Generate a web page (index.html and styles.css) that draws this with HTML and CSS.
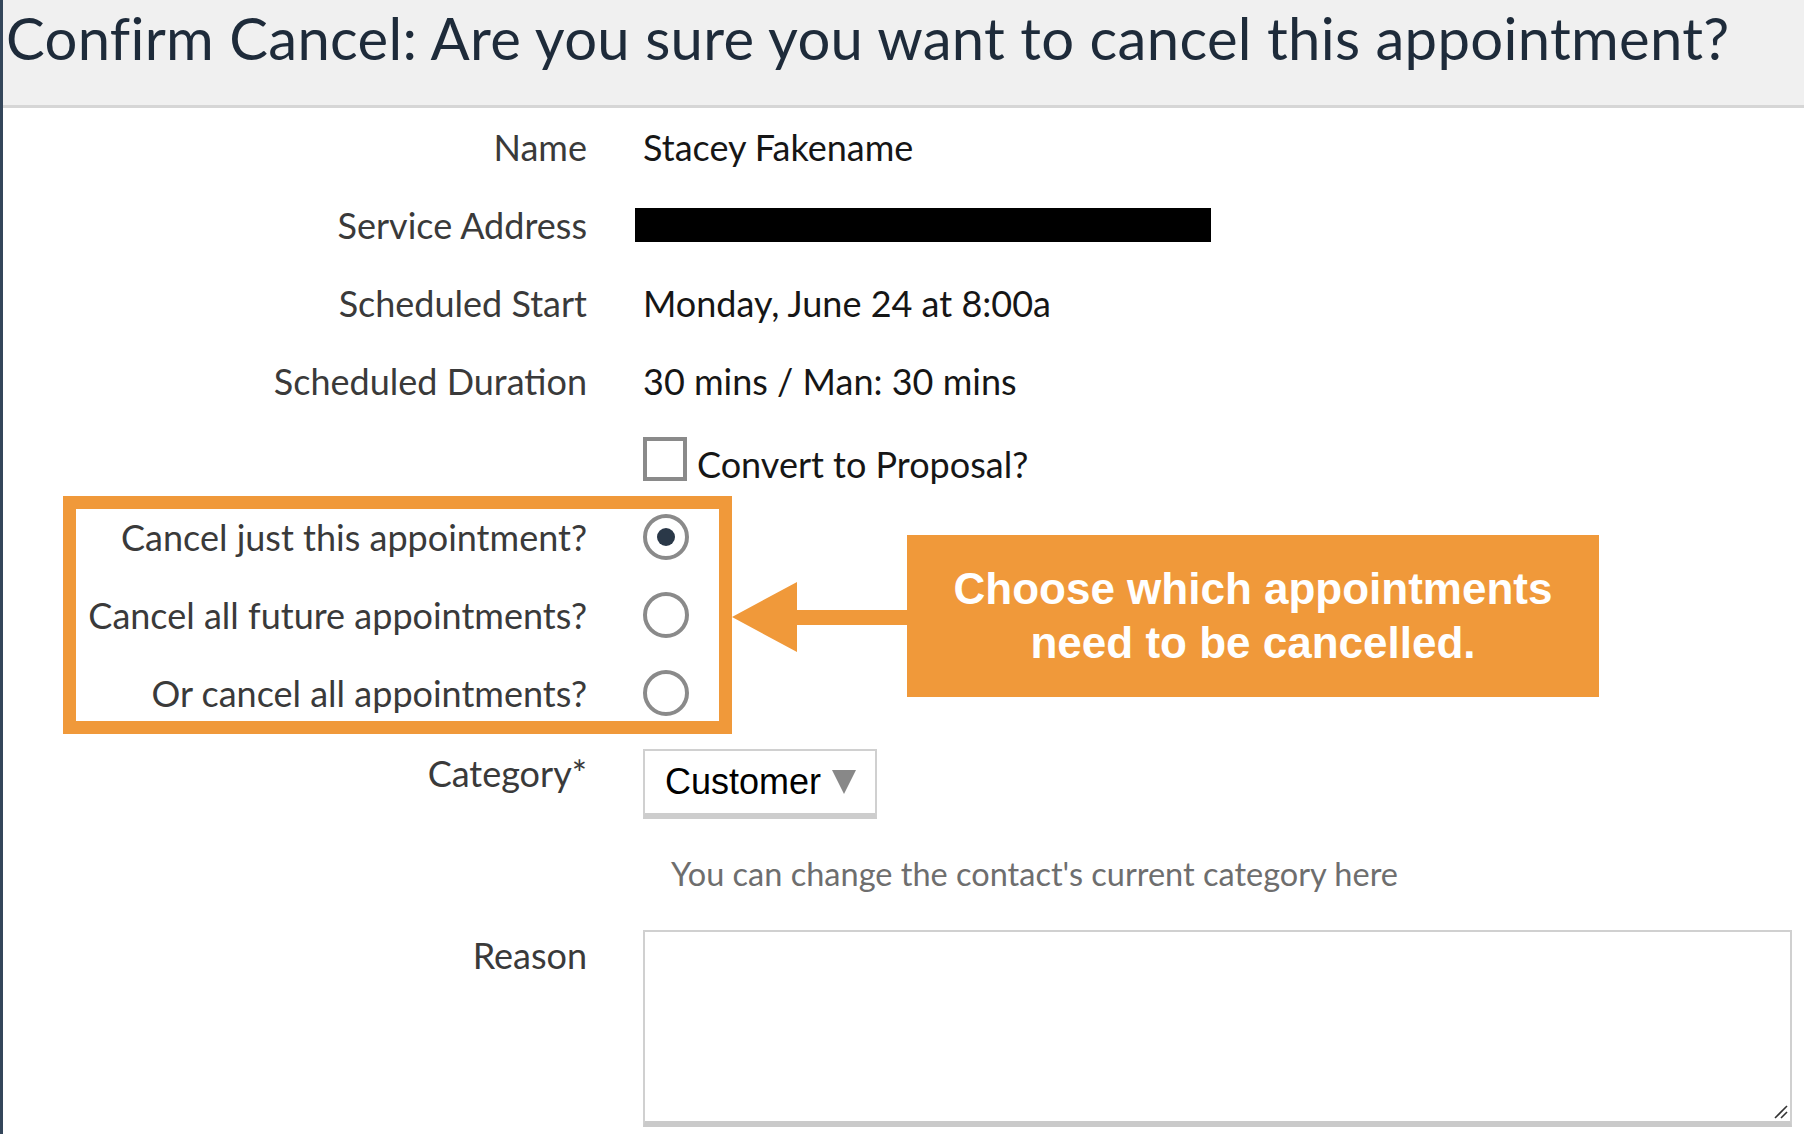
FILE: index.html
```html
<!DOCTYPE html>
<html lang="en">
<head>
<meta charset="utf-8">
<title>Confirm Cancel</title>
<link rel="stylesheet" href="styles.css">
</head>
<body>
<div class="page">
  <header class="header">
    <h1 class="title">Confirm Cancel: Are you sure you want to cancel this appointment?</h1>
  </header>
  <div class="form">
    <div class="row">
      <div class="label">Name</div>
      <div class="value">Stacey Fakename</div>
    </div>
    <div class="row">
      <div class="label">Service Address</div>
      <div class="value"><div class="redact"></div></div>
    </div>
    <div class="row">
      <div class="label">Scheduled Start</div>
      <div class="value">Monday, June 24 at 8:00a</div>
    </div>
    <div class="row">
      <div class="label">Scheduled Duration</div>
      <div class="value">30 mins / Man: 30 mins</div>
    </div>
    <div class="row">
      <div class="label"></div>
      <div class="value check-line"><span class="checkbox"></span><span class="check-text">Convert to Proposal?</span></div>
    </div>
    <div class="row">
      <div class="label">Cancel just this appointment?</div>
      <div class="value"><span class="radio checked"></span></div>
    </div>
    <div class="row">
      <div class="label">Cancel all future appointments?</div>
      <div class="value"><span class="radio"></span></div>
    </div>
    <div class="row">
      <div class="label">Or cancel all appointments?</div>
      <div class="value"><span class="radio"></span></div>
    </div>
    <div class="row row-top category-row">
      <div class="label">Category*</div>
      <div class="value"><div class="select"><span class="select-text">Customer</span><span class="caret"></span></div></div>
    </div>
    <div class="row row-top helper-row">
      <div class="label"></div>
      <div class="value helper">You can change the contact's current category here</div>
    </div>
    <div class="row row-top reason-row">
      <div class="label">Reason</div>
      <div class="value">
        <div class="textarea-wrap">
          <textarea class="textarea"></textarea>
          <svg class="grip" width="16" height="16" viewBox="0 0 16 16">
            <line x1="3" y1="15" x2="15" y2="3" stroke="#333" stroke-width="1.6"/>
            <line x1="9" y1="15" x2="15" y2="9" stroke="#333" stroke-width="1.6"/>
          </svg>
        </div>
      </div>
    </div>
  </div>

  <div class="highlight"></div>
  <svg class="arrow" width="175" height="70" viewBox="0 0 175 70">
    <polygon points="0,35 65,0 65,28 175,28 175,43 65,43 65,70" fill="#f0993a"/>
  </svg>
  <div class="callout">Choose which appointments<br>need to be cancelled.</div>
</div>
</body>
</html>
```

FILE: styles.css
```css
html, body {
  margin: 0;
  padding: 0;
  background: #ffffff;
}

body {
  font-family: Lato, "Open Sans", sans-serif;
}

.page {
  position: relative;
  min-height: 1134px;
  border-left: 3px solid #34465a;
  box-sizing: border-box;
  overflow: hidden;
}

.header {
  height: 105px;
  background: #f0f0f0;
  border-bottom: 3px solid #d6d6d6;
}

.title {
  margin: 0;
  padding: 2px 0 0 3px;
  font-size: 58px;
  letter-spacing: 0.3px;
  line-height: 72px;
  font-weight: 400;
  color: #1e2b3a;
  white-space: nowrap;
}

.form {
  display: flex;
  flex-direction: column;
}

.row {
  display: flex;
  align-items: center;
  height: 78px;
  gap: 56px;
}

.row-top {
  align-items: flex-start;
  height: auto;
}

.label {
  width: 584px;
  flex: 0 0 584px;
  text-align: right;
  font-size: 36px;
  color: #3a3a3a;
  line-height: 48px;
}

.value {
  font-size: 36px;
  color: #161616;
  line-height: 48px;
  display: flex;
  align-items: center;
}

.redact {
  width: 576px;
  height: 34px;
  background: #000;
  margin-left: -8px;
}

.check-line {
  gap: 10px;
}

.checkbox {
  display: inline-block;
  width: 44px;
  height: 44px;
  box-sizing: border-box;
  border: 4px solid #8a8a8a;
  background: #fff;
}

.check-text {
  position: relative;
  top: 5px;
}

.radio {
  display: inline-block;
  width: 46px;
  height: 46px;
  box-sizing: border-box;
  border: 4px solid #8a8a8a;
  border-radius: 50%;
  background: #fff;
  position: relative;
}

.radio.checked::after {
  content: "";
  position: absolute;
  left: 10px;
  top: 10px;
  width: 18px;
  height: 18px;
  border-radius: 50%;
  background: #2a3848;
}

.category-row {
  margin-top: 17px;
}

.select {
  width: 234px;
  height: 70px;
  box-sizing: border-box;
  border: 2px solid #d0d0d0;
  border-bottom: 6px solid #cdcdcd;
  background: #fff;
  display: flex;
  align-items: center;
  padding-left: 20px;
  gap: 11px;
}

.select-text {
  font-family: "Liberation Sans", Arial, sans-serif;
  font-size: 36px;
  color: #000;
}

.caret {
  width: 0;
  height: 0;
  border-left: 12px solid transparent;
  border-right: 12px solid transparent;
  border-top: 24px solid #888888;
}

.helper-row {
  margin-top: 31px;
}

.helper {
  color: #6e6e6e;
  padding-left: 28px;
  font-size: 32.5px;
}

.reason-row {
  margin-top: 32px;
}

.reason-row .label {
  line-height: 50px;
}

.textarea-wrap {
  position: relative;
  width: 1149px;
  height: 197px;
}

.textarea {
  width: 1149px;
  height: 197px;
  box-sizing: border-box;
  border: 2px solid #d0d0d0;
  border-bottom: 6px solid #cacaca;
  border-radius: 0;
  margin: 0;
  padding: 0;
  display: block;
  resize: none;
  background: #fff;
}

.grip {
  position: absolute;
  right: 4px;
  bottom: 8px;
}

.highlight {
  position: absolute;
  left: 60px;
  top: 496px;
  width: 669px;
  height: 238px;
  box-sizing: border-box;
  border: 13px solid #f0993a;
  pointer-events: none;
}

.arrow {
  position: absolute;
  left: 729px;
  top: 582px;
}

.callout {
  position: absolute;
  left: 904px;
  top: 535px;
  width: 692px;
  height: 162px;
  background: #f0993a;
  color: #ffffff;
  font-family: "Liberation Sans", Arial, sans-serif;
  font-weight: 700;
  font-size: 44px;
  line-height: 54px;
  text-align: center;
  display: flex;
  align-items: center;
  justify-content: center;
}
```
